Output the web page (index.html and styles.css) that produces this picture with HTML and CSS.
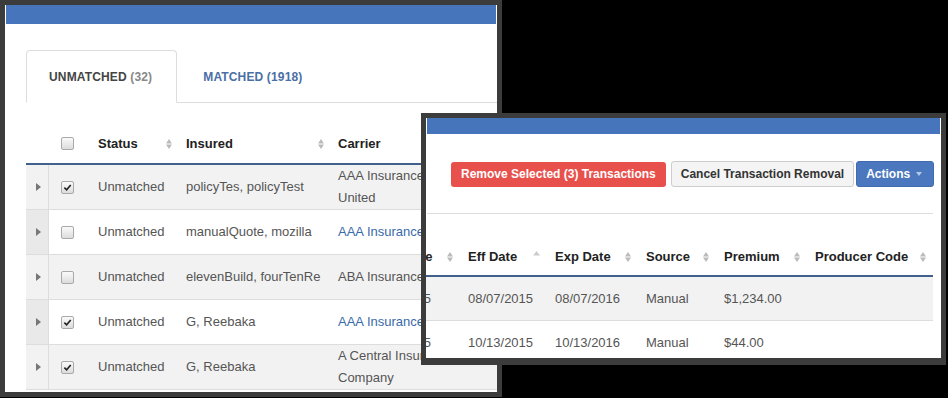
FILE: index.html
```html
<!DOCTYPE html>
<html lang="en">
<head>
    <meta charset="UTF-8">
    <meta name="viewport" content="width=device-width, initial-scale=1.0">
    <title>Transactions</title>
    <link rel="stylesheet" href="styles.css">
</head>
<body>
    <!-- left window: unmatched list -->
    <div class="win win-left">
        <div class="bar"></div>
        <div class="tabs">
            <div class="tab active">UNMATCHED <span class="count">(32)</span></div>
            <div class="tab">MATCHED (1918)</div>
        </div>
        <table class="grid grid-left">
            <colgroup>
                <col class="c-exp"><col class="c-cb"><col class="c-status"><col class="c-insured"><col class="c-carrier">
            </colgroup>
            <thead>
                <tr>
                    <th></th>
                    <th class="cb-cell"><span class="cb"></span></th>
                    <th><div class="th-in">Status <svg class="sort" width="6" height="10" viewBox="0 0 6 10"><path d="M3 0L6 4.4H0Z M0 5.6H6L3 10Z"/></svg></div></th>
                    <th><div class="th-in">Insured <svg class="sort" width="6" height="10" viewBox="0 0 6 10"><path d="M3 0L6 4.4H0Z M0 5.6H6L3 10Z"/></svg></div></th>
                    <th><div class="th-in">Carrier</div></th>
                </tr>
            </thead>
            <tbody>
                <tr>
                    <td class="exp"><svg width="5" height="8" viewBox="0 0 5 8"><path d="M0 0L5 4L0 8Z"/></svg></td>
                    <td class="cb-cell"><span class="cb"><svg width="9" height="9" viewBox="0 0 10 10"><path d="M1.5 5.2L4 7.6L8.6 2.2"/></svg></span></td>
                    <td>Unmatched</td>
                    <td>policyTes, policyTest</td>
                    <td><div class="carrier">AAA Insurance United</div></td>
                </tr>
                <tr>
                    <td class="exp"><svg width="5" height="8" viewBox="0 0 5 8"><path d="M0 0L5 4L0 8Z"/></svg></td>
                    <td class="cb-cell"><span class="cb"></span></td>
                    <td>Unmatched</td>
                    <td>manualQuote, mozilla</td>
                    <td><div class="carrier"><a href="#">AAA Insurance</a></div></td>
                </tr>
                <tr>
                    <td class="exp"><svg width="5" height="8" viewBox="0 0 5 8"><path d="M0 0L5 4L0 8Z"/></svg></td>
                    <td class="cb-cell"><span class="cb"></span></td>
                    <td>Unmatched</td>
                    <td>elevenBuild, fourTenRe</td>
                    <td><div class="carrier">ABA Insurance</div></td>
                </tr>
                <tr>
                    <td class="exp"><svg width="5" height="8" viewBox="0 0 5 8"><path d="M0 0L5 4L0 8Z"/></svg></td>
                    <td class="cb-cell"><span class="cb"><svg width="9" height="9" viewBox="0 0 10 10"><path d="M1.5 5.2L4 7.6L8.6 2.2"/></svg></span></td>
                    <td>Unmatched</td>
                    <td>G, Reebaka</td>
                    <td><div class="carrier"><a href="#">AAA Insurance</a></div></td>
                </tr>
                <tr>
                    <td class="exp"><svg width="5" height="8" viewBox="0 0 5 8"><path d="M0 0L5 4L0 8Z"/></svg></td>
                    <td class="cb-cell"><span class="cb"><svg width="9" height="9" viewBox="0 0 10 10"><path d="M1.5 5.2L4 7.6L8.6 2.2"/></svg></span></td>
                    <td>Unmatched</td>
                    <td>G, Reebaka</td>
                    <td><div class="carrier">A Central Insurance Company</div></td>
                </tr>
            </tbody>
        </table>
    </div>

    <!-- right window: removal toolbar -->
    <div class="win win-right">
        <div class="bar"></div>
        <div class="toolbar">
            <button class="btn btn-red">Remove Selected (3) Transactions</button>
            <button class="btn btn-plain">Cancel Transaction Removal</button>
            <button class="btn btn-blue">Actions <svg width="6" height="4" viewBox="0 0 6 4"><path d="M0 0H6L3 4Z"/></svg></button>
        </div>
        <div class="rule"></div>
        <table class="grid grid-right">
            <colgroup>
                <col class="c-trans"><col class="c-eff"><col class="c-exp-date"><col class="c-source"><col class="c-premium"><col class="c-producer">
            </colgroup>
            <thead>
                <tr>
                    <th><div class="th-in">Trans Date <svg class="sort" width="6" height="10" viewBox="0 0 6 10"><path d="M3 0L6 4.4H0Z M0 5.6H6L3 10Z"/></svg></div></th>
                    <th><div class="th-in">Eff Date <svg class="sort sort-up" width="7" height="10" viewBox="0 0 7 10"><path d="M3.5 0L7 4.4H0Z"/></svg></div></th>
                    <th><div class="th-in">Exp Date <svg class="sort" width="6" height="10" viewBox="0 0 6 10"><path d="M3 0L6 4.4H0Z M0 5.6H6L3 10Z"/></svg></div></th>
                    <th><div class="th-in">Source <svg class="sort" width="6" height="10" viewBox="0 0 6 10"><path d="M3 0L6 4.4H0Z M0 5.6H6L3 10Z"/></svg></div></th>
                    <th><div class="th-in">Premium <svg class="sort" width="6" height="10" viewBox="0 0 6 10"><path d="M3 0L6 4.4H0Z M0 5.6H6L3 10Z"/></svg></div></th>
                    <th><div class="th-in">Producer Code <svg class="sort" width="6" height="10" viewBox="0 0 6 10"><path d="M3 0L6 4.4H0Z M0 5.6H6L3 10Z"/></svg></div></th>
                </tr>
            </thead>
            <tbody>
                <tr>
                    <td>08/07/2015</td>
                    <td>08/07/2015</td>
                    <td>08/07/2016</td>
                    <td>Manual</td>
                    <td>$1,234.00</td>
                    <td></td>
                </tr>
                <tr>
                    <td>10/13/2015</td>
                    <td>10/13/2015</td>
                    <td>10/13/2016</td>
                    <td>Manual</td>
                    <td>$44.00</td>
                    <td></td>
                </tr>
            </tbody>
        </table>
    </div>
</body>
</html>
```

FILE: styles.css
```css
*{
    margin: 0;
    padding: 0;
    box-sizing: border-box;
}

body{
    width: 948px;
    height: 398px;
    background-color: #000;
    position: relative;
    overflow: hidden;
    font-family: "Liberation Sans", Arial, sans-serif;
    font-size: 13px;
    color: #555;
}

/* the two screenshot windows sit on a black desktop */
.win{
    position: absolute;
    background-color: #fff;
    border: 5px solid #3c3c3c;
    overflow: hidden;
}
.win-left{
    left: 0;
    top: 0;
    width: 502px;
    height: 397px;
}
.win-right{
    left: 421px;
    top: 113px;
    width: 525px;
    height: 252px;
    border-bottom-width: 7px;
}
.bar{
    background-color: #4775bb;
    margin: 0 1px;
}
.win-left .bar{
    height: 19px;
}
.win-right .bar{
    height: 16px;
}

/* tabs */
.tabs{
    display: flex;
    margin: 26px 0 0 21px;
    border-bottom: 1px solid #ddd;
}
.tab{
    display: flex;
    align-items: center;
    height: 53px;
    margin-bottom: -1px;
    padding: 0 24px 0 22px;
    border: 1px solid transparent;
    border-radius: 4px 4px 0 0;
    font-size: 12px;
    font-weight: bold;
    color: #4a6fa5;
    white-space: pre;
    letter-spacing: 0.15px;
}
.tab.active{
    border-color: #ddd;
    border-bottom-color: #fff;
    color: #444;
}
.tab + .tab{
    padding-left: 25px;
}
.count{
    color: #888;
}

/* tables */
.grid{
    border-collapse: separate;
    border-spacing: 0;
    table-layout: fixed;
}
.grid th{
    text-align: left;
    color: #222;
    font-weight: bold;
    border-bottom: 2px solid #41608c;
    padding: 0 6px 0 8px;
}
.grid td{
    padding: 0 8px;
    line-height: 22px;
    border-bottom: 1px solid #ddd;
    vertical-align: middle;
    white-space: nowrap;
}
.grid tbody tr:nth-child(odd) td{
    background-color: #f2f2f2;
}
.th-in{
    display: flex;
    align-items: center;
    justify-content: space-between;
}
.sort{
    fill: #bbb;
    flex-shrink: 0;
}
.sort-up{
    fill: #ccc;
    margin-top: -1px;
}

.grid-left{
    margin: 21px 0 0 21px;
    width: 471px;
}
.grid-left th{
    height: 41px;
}
.grid-left td{
    height: 45px;
}
.c-exp{ width: 23px; }
.c-cb{ width: 41px; }
.c-status{ width: 88px; }
.c-insured{ width: 152px; }

.grid-left td.exp{
    background-color: #e9e9e9;
    border-right: 1px solid #ddd;
    padding: 0 0 0 10px;
    fill: #777;
}
.grid-left .cb-cell{
    padding: 0 0 0 12px;
}
.cb{
    display: flex;
    align-items: center;
    justify-content: center;
    width: 13px;
    height: 13px;
    border: 1px solid #a9a9a9;
    border-radius: 2px;
    background: linear-gradient(#fafafa, #dcdcdc);
}
.cb svg path{
    fill: none;
    stroke: #222;
    stroke-width: 1.8;
}
.grid-left td .carrier{
    width: 122px;
    white-space: normal;
}
.carrier a{
    color: #3a6aa8;
    text-decoration: none;
}

/* right window */
.toolbar{
    display: flex;
    align-items: center;
    margin: 27px 0 0 25px;
}
.btn{
    height: 26px;
    padding: 0 9px;
    border: 1px solid transparent;
    border-radius: 3px;
    font-family: "Liberation Sans", Arial, sans-serif;
    font-size: 12px;
    font-weight: bold;
    cursor: pointer;
}
.btn-red{
    height: 25px;
    background-color: #e8504c;
    color: #fff;
    margin-right: 5px;
}
.btn-plain{
    background-color: #f4f4f4;
    border-color: #ccc;
    color: #333;
    margin-right: 2px;
}
.btn-blue{
    display: flex;
    align-items: center;
    gap: 6px;
    padding: 0 11px 0 9px;
    background-color: #4a77be;
    border-color: #416bb0;
    color: #fff;
    fill: #b4c8ec;
}
.rule{
    margin: 26px 8px 0 1px;
    border-top: 1px solid #ddd;
}

.grid-right{
    margin: 24px 0 0 -68px;
    width: 575px;
}
.grid-right th{
    height: 39px;
    padding-right: 7px;
}
.grid-right td{
    height: 44px;
}
.c-trans{ width: 102px; }
.c-eff{ width: 87px; }
.c-exp-date{ width: 91px; }
.c-source{ width: 78px; }
.c-premium{ width: 91px; }
.c-producer{ width: 126px; }
```
